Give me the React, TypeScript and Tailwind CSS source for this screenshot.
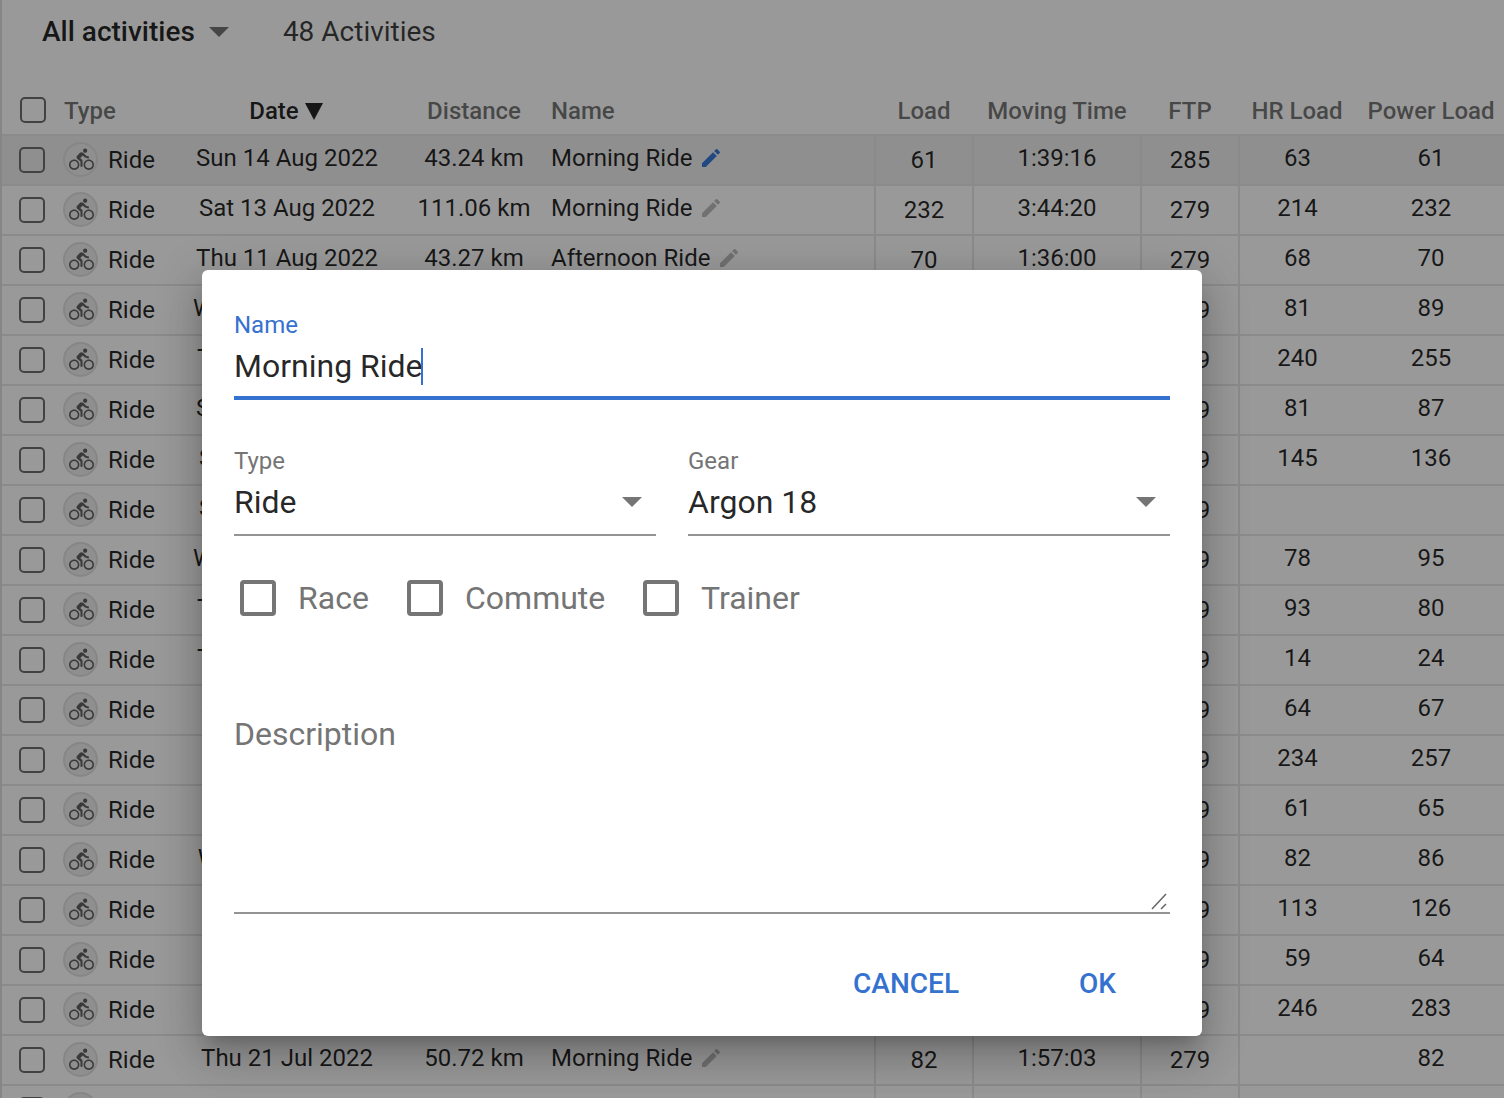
import { MdDirectionsBike, MdEdit } from "react-icons/md";

type Activity = {
  date: string;
  distance: string;
  name: string;
  load: string;
  time: string;
  ftp: string;
  hr: string;
  power: string;
};

const ACTIVITIES: Activity[] = [
  { date: "Sun 14 Aug 2022", distance: "43.24 km", name: "Morning Ride", load: "61", time: "1:39:16", ftp: "285", hr: "63", power: "61" },
  { date: "Sat 13 Aug 2022", distance: "111.06 km", name: "Morning Ride", load: "232", time: "3:44:20", ftp: "279", hr: "214", power: "232" },
  { date: "Thu 11 Aug 2022", distance: "43.27 km", name: "Afternoon Ride", load: "70", time: "1:36:00", ftp: "279", hr: "68", power: "70" },
  { date: "Wed 10 Aug 2022", distance: "52.18 km", name: "Morning Ride", load: "89", time: "1:58:41", ftp: "279", hr: "81", power: "89" },
  { date: "Tue 09 Aug 2022", distance: "102.40 km", name: "Morning Ride", load: "255", time: "3:51:10", ftp: "279", hr: "240", power: "255" },
  { date: "Sun 07 Aug 2022", distance: "48.33 km", name: "Morning Ride", load: "87", time: "1:49:22", ftp: "279", hr: "81", power: "87" },
  { date: "Sat 06 Aug 2022", distance: "76.51 km", name: "Morning Ride", load: "136", time: "2:44:05", ftp: "279", hr: "145", power: "136" },
  { date: "Sat 06 Aug 2022", distance: "12.04 km", name: "Evening Ride", load: "", time: "0:31:47", ftp: "279", hr: "", power: "" },
  { date: "Wed 03 Aug 2022", distance: "45.62 km", name: "Morning Ride", load: "95", time: "1:44:50", ftp: "279", hr: "78", power: "95" },
  { date: "Tue 02 Aug 2022", distance: "44.10 km", name: "Morning Ride", load: "80", time: "1:40:33", ftp: "279", hr: "93", power: "80" },
  { date: "Tue 02 Aug 2022", distance: "10.75 km", name: "Evening Ride", load: "24", time: "0:29:14", ftp: "279", hr: "14", power: "24" },
  { date: "Sun 31 Jul 2022", distance: "40.88 km", name: "Morning Ride", load: "67", time: "1:32:19", ftp: "279", hr: "64", power: "67" },
  { date: "Sat 30 Jul 2022", distance: "118.23 km", name: "Morning Ride", load: "257", time: "4:02:36", ftp: "279", hr: "234", power: "257" },
  { date: "Fri 29 Jul 2022", distance: "39.46 km", name: "Morning Ride", load: "65", time: "1:28:02", ftp: "279", hr: "61", power: "65" },
  { date: "Wed 27 Jul 2022", distance: "49.71 km", name: "Morning Ride", load: "86", time: "1:52:44", ftp: "279", hr: "82", power: "86" },
  { date: "Tue 26 Jul 2022", distance: "66.09 km", name: "Morning Ride", load: "126", time: "2:21:30", ftp: "279", hr: "113", power: "126" },
  { date: "Sun 24 Jul 2022", distance: "37.92 km", name: "Morning Ride", load: "64", time: "1:24:58", ftp: "279", hr: "59", power: "64" },
  { date: "Sat 23 Jul 2022", distance: "124.37 km", name: "Morning Ride", load: "283", time: "4:18:12", ftp: "279", hr: "246", power: "283" },
  { date: "Thu 21 Jul 2022", distance: "50.72 km", name: "Morning Ride", load: "82", time: "1:57:03", ftp: "279", hr: "", power: "82" },
  { date: "Wed 20 Jul 2022", distance: "41.15 km", name: "Morning Ride", load: "70", time: "1:35:27", ftp: "279", hr: "66", power: "70" },
];

function Caret({ className }: { className: string }) {
  return (
    <svg viewBox="0 0 20 10" preserveAspectRatio="none" className={className} fill="currentColor">
      <path d="M0 0h20L10 10z" />
    </svg>
  );
}

function TableRow({ row, active }: { row: Activity; active: boolean }) {
  return (
    <div className={`flex h-[50px] shrink-0 items-stretch border-b-2 border-[#e8e8e8] text-[24px] text-black/85 ${active ? "bg-[#eeeeee]" : ""}`}>
      <div className="flex w-[61px] shrink-0 items-center pb-[1px] pl-[17px]">
        <span className="h-[26px] w-[26px] rounded-[5px] border-2 border-[#6f6f6f]" />
      </div>
      <div className="flex w-[107px] shrink-0 items-center">
        <span className="mb-[2px] flex h-[35px] w-[35px] items-center justify-center rounded-full border-2 border-[#e0e0e0] bg-[#efefef] pl-[1px] text-[#616161]">
          <MdDirectionsBike size={25} />
        </span>
        <span className="ml-[10px]">Ride</span>
      </div>
      <div className="flex w-[234px] shrink-0 items-center justify-center pb-1 whitespace-nowrap">{row.date}</div>
      <div className="flex w-[140px] shrink-0 items-center justify-center pb-1 whitespace-nowrap">{row.distance}</div>
      <div className="flex w-[330px] shrink-0 items-center gap-[7px] pb-1 pl-[7px]">
        <span className="whitespace-nowrap">{row.name}</span>
        <MdEdit size={24} className={active ? "text-[#3a78d8]" : "text-[#bdbdbd]"} />
      </div>
      <div className="flex w-[98px] shrink-0 items-center justify-center border-l-2 border-[#e8e8e8]">{row.load}</div>
      <div className="flex w-[168px] shrink-0 items-center justify-center border-l-2 border-[#e8e8e8] pb-1">{row.time}</div>
      <div className="flex w-[98px] shrink-0 items-center justify-center border-l-2 border-[#e8e8e8]">{row.ftp}</div>
      <div className="flex w-[117px] shrink-0 items-center justify-center border-l-2 border-[#e8e8e8] pb-1">{row.hr}</div>
      <div className="flex w-[152px] shrink-0 items-center justify-center pb-1">{row.power}</div>
    </div>
  );
}

function DialogCheckbox({ label, className }: { label: string; className: string }) {
  return (
    <label className={`flex items-center gap-[22px] ${className}`}>
      <span className="h-[36px] w-[36px] rounded-[4px] border-[4px] border-[#757575]" />
      <span className="text-[32px] text-[#757575]">{label}</span>
    </label>
  );
}

function SelectField({ label, value, className }: { label: string; value: string; className: string }) {
  return (
    <div className={className}>
      <div className="text-[24px] leading-[28px] text-[#757575]">{label}</div>
      <div className="mt-[7px] flex h-[54px] items-start justify-between border-b-2 border-[#949494]">
        <span className="text-[32px] leading-[40px] text-black/85">{value}</span>
        <Caret className="mt-[15px] mr-[14px] h-[10px] w-[20px] text-[#757575]" />
      </div>
    </div>
  );
}

function EditDialog() {
  return (
    <div className="absolute top-[270px] left-[202px] flex h-[766px] w-[1000px] flex-col rounded-[6px] bg-white px-8 pt-[40px] shadow-[0_11px_15px_-7px_rgba(0,0,0,0.2),0_24px_38px_3px_rgba(0,0,0,0.14),0_9px_46px_8px_rgba(0,0,0,0.12)]">
      <div className="text-[24px] leading-[30px] text-[#3572cf]">Name</div>
      <div className="mt-[2px] flex h-[58px] items-start border-b-4 border-[#3572cf]">
        <span className="text-[32px] leading-[48px] text-black/85">Morning Ride</span>
        <span className="mt-[6px] -ml-[2px] h-[37px] w-[2px] bg-[#3572cf]" />
      </div>

      <div className="mt-[47px] flex gap-[32px]">
        <SelectField label="Type" value="Ride" className="w-[422px]" />
        <SelectField label="Gear" value="Argon 18" className="w-[482px]" />
      </div>

      <div className="mt-[38px] flex items-center pl-[6px]">
        <DialogCheckbox label="Race" className="w-[167px]" />
        <DialogCheckbox label="Commute" className="w-[236px]" />
        <DialogCheckbox label="Trainer" className="" />
      </div>

      <div className="relative mt-[92px] h-[200px] border-b-2 border-[#949494] text-[32px] leading-[40px] text-[#757575]">
        Description
        <svg viewBox="0 0 18 18" className="absolute right-[1px] bottom-[1px] h-[18px] w-[18px] text-[#666666]" fill="none" stroke="currentColor" strokeWidth="1.5">
          <path d="M1 16 15 1M10 16l5-5" />
        </svg>
      </div>

      <div className="mt-[52px] flex items-center justify-end pr-[54px] text-[28px] leading-[36px] font-medium text-[#3572cf]">
        <span>CANCEL</span>
        <span className="ml-[120px]">OK</span>
      </div>
    </div>
  );
}

export default function App() {
  return (
    <div className="relative h-[1098px] w-[1504px] overflow-hidden bg-white font-['Roboto',sans-serif]">
      <div className="flex h-full w-[1507px] flex-col border-l-2 border-[#e0e0e0]">
        <div className="flex h-[64px] shrink-0 items-center text-[28px]">
          <span className="ml-[40px] font-medium text-black/85">All activities</span>
          <Caret className="ml-[14px] h-[10px] w-[20px] text-[#757575]" />
          <span className="ml-[54px] text-black/75">48 Activities</span>
        </div>
        <div className="mt-[24px] flex h-[48px] shrink-0 items-center border-b-2 border-[#e8e8e8] text-[24px] font-medium text-black/55">
          <div className="w-[62px] shrink-0 pb-[2px] pl-[18px]">
            <span className="block h-[26px] w-[26px] rounded-[5px] border-2 border-[#6f6f6f]" />
          </div>
          <div className="w-[106px] shrink-0">Type</div>
          <div className="flex w-[232px] shrink-0 items-center justify-center gap-[6px] text-black/85">
            Date
            <Caret className="h-[17px] w-[18px]" />
          </div>
          <div className="ml-[2px] w-[140px] shrink-0 text-center">Distance</div>
          <div className="w-[331px] shrink-0 pl-[7px]">Name</div>
          <div className="w-[98px] shrink-0 text-center">Load</div>
          <div className="w-[168px] shrink-0 text-center">Moving Time</div>
          <div className="w-[98px] shrink-0 text-center">FTP</div>
          <div className="w-[116px] shrink-0 text-center">HR Load</div>
          <div className="w-[152px] shrink-0 text-center">Power Load</div>
        </div>
        {ACTIVITIES.map((row, i) => (
          <TableRow key={i} row={row} active={i === 0} />
        ))}
      </div>

      <div className="absolute inset-0 bg-black/40" />
      <EditDialog />
    </div>
  );
}
